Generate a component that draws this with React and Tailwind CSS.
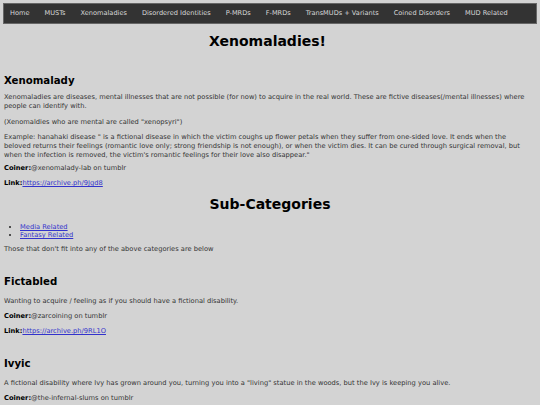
export default function App() {
  const nav = [
    'Home',
    'MUSTs',
    'Xenomaladies',
    'Disordered Identities',
    'P-MRDs',
    'F-MRDs',
    'TransMUDs + Variants',
    'Coined Disorders',
    'MUD Related',
  ];

  const font = { fontFamily: '"DejaVu Sans", Verdana, sans-serif' };

  return (
    <div className="min-h-[405px] bg-[#d3d3d3] pt-[3px] px-[3px] pb-4 text-[#333] text-[6.7px] leading-[9px]" style={font}>
      {/* Top nav */}
      <nav className="bg-[#333] border border-[#666] h-[21px] flex items-center pl-[6px] gap-[15px] text-[#d8d8d8] text-[6.6px]">
        {nav.map((n) => (
          <span key={n}>{n}</span>
        ))}
      </nav>

      <div className="pl-px pr-[6px]">
        <h1 className="text-center font-bold text-black text-[14px] leading-[16px] mt-[9px]">Xenomaladies!</h1>

        {/* Xenomalady */}
        <h2 className="font-bold text-black text-[10.2px] leading-[14px] mt-[25px]">Xenomalady</h2>
        <p className="mt-[5px]">
          Xenomaladies are diseases, mental illnesses that are not possible (for now) to acquire in the real world. These are fictive diseases(/mental illnesses) where people can identify with.
        </p>
        <p className="mt-[7px]">(Xenomaldies who are mental are called "xenopsyri")</p>
        <p className="mt-[6px]">
          Example: hanahaki disease " is a fictional disease in which the victim coughs up flower petals when they suffer from one-sided love. It ends when the beloved returns their feelings (romantic love only; strong friendship is not enough), or when the victim dies. It can be cured through surgical removal, but when the infection is removed, the victim's romantic feelings for their love also disappear."
        </p>
        <p className="mt-[4px]">
          <b className="text-black">Coiner:</b>@xenomalady-lab on tumblr
        </p>
        <p className="mt-[6px]">
          <b className="text-black">Link:</b>
          <a href="#" className="text-[#33c] underline">https://archive.ph/9Jgd8</a>
        </p>

        {/* Sub-categories */}
        <h1 className="text-center font-bold text-black text-[14px] leading-[16px] mt-[8px] pl-[5px]">Sub-Categories</h1>
        <ul className="list-disc pl-[16px] mt-[11px] text-[#33c] marker:text-[#222]">
          <li className="leading-[8px]"><a href="#" className="underline">Media Related</a></li>
          <li className="leading-[8px]"><a href="#" className="underline">Fantasy Related</a></li>
        </ul>
        <p className="mt-[6px]">Those that don't fit into any of the above categories are below</p>

        {/* Fictabled */}
        <h2 className="font-bold text-black text-[10.2px] leading-[14px] mt-[21px]">Fictabled</h2>
        <p className="mt-[8px]">Wanting to acquire / feeling as if you should have a fictional disability.</p>
        <p className="mt-[6px]">
          <b className="text-black">Coiner:</b>@zarcoining on tumblr
        </p>
        <p className="mt-[6px]">
          <b className="text-black">Link:</b>
          <a href="#" className="text-[#33c] underline">https://archive.ph/9RL1O</a>
        </p>

        {/* Ivyic */}
        <h2 className="font-bold text-black text-[10.2px] leading-[14px] mt-[21px]">Ivyic</h2>
        <p className="mt-[8px]">
          A fictional disability where Ivy has grown around you, turning you into a "living" statue in the woods, but the Ivy is keeping you alive.
        </p>
        <p className="mt-[6px]">
          <b className="text-black">Coiner:</b>@the-infernal-slums on tumblr
        </p>
      </div>
    </div>
  );
}
